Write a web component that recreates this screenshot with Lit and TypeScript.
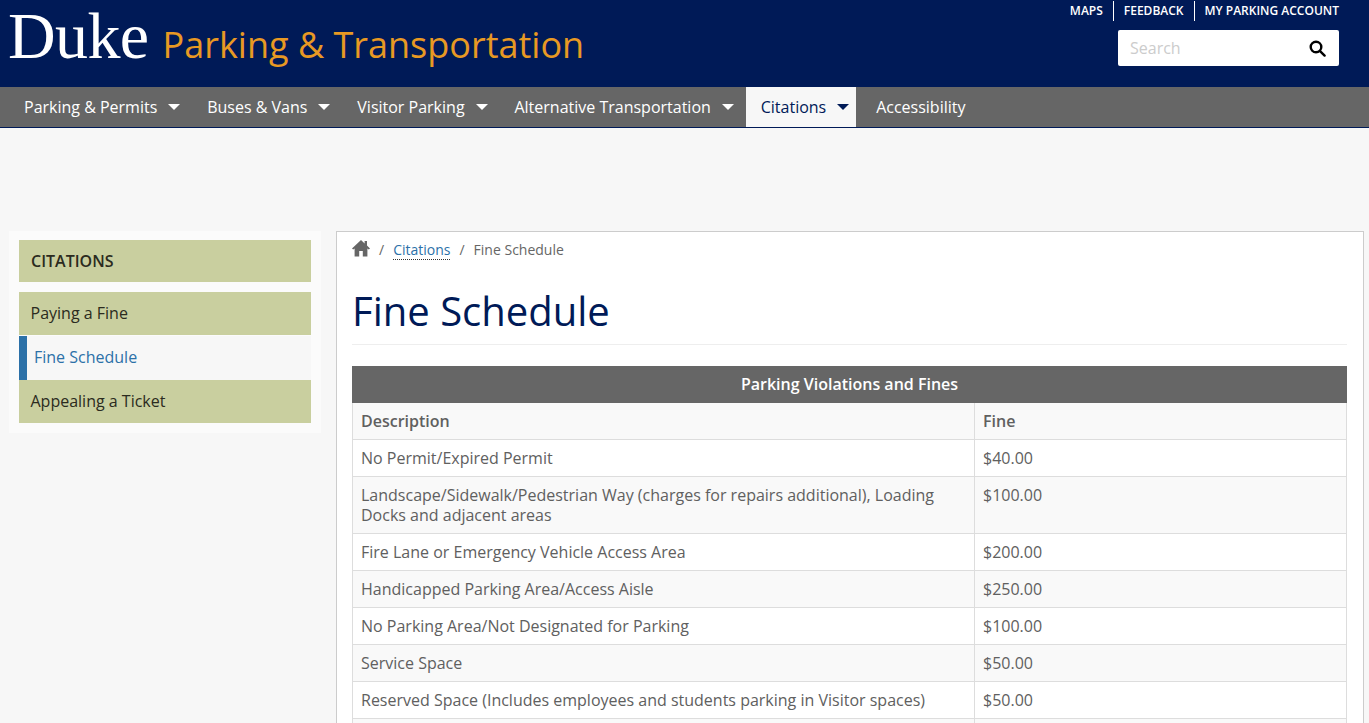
import {LitElement, html, css} from "lit";
import {customElement} from "lit/decorators.js";

const NAV = [
	{label: "Parking & Permits", caret: true},
	{label: "Buses & Vans", caret: true},
	{label: "Visitor Parking", caret: true},
	{label: "Alternative Transportation", caret: true},
	{label: "Citations", caret: true, active: true},
	{label: "Accessibility", caret: false},
];

const FINES = [
	["No Permit/Expired Permit", "$40.00"],
	["Landscape/Sidewalk/Pedestrian Way (charges for repairs additional), Loading Docks and adjacent areas", "$100.00"],
	["Fire Lane or Emergency Vehicle Access Area", "$200.00"],
	["Handicapped Parking Area/Access Aisle", "$250.00"],
	["No Parking Area/Not Designated for Parking", "$100.00"],
	["Service Space", "$50.00"],
	["Reserved Space (Includes employees and students parking in Visitor spaces)", "$50.00"],
	["", ""],
];

@customElement("app-root")
export class AppRoot extends LitElement {
	static styles = css`
		:host {
			display: block;
			height: 723px;
			overflow: hidden;
			background: #f7f7f7;
			font-family: "Open Sans", sans-serif;
			font-size: 16px;
			line-height: 20px;
			color: #606060;
		}

		* {
			box-sizing: border-box;
		}

		a {
			color: inherit;
			text-decoration: none;
		}

		.top {
			display: flex;
			justify-content: space-between;
			height: 87px;
			padding: 0 30px 0 8px;
			background: #001a57;
		}

		.brand {
			display: flex;
			align-items: baseline;
			padding-top: 1px;
		}

		.duke {
			font-family: "Liberation Serif", serif;
			font-size: 66px;
			line-height: 70px;
			letter-spacing: -0.6px;
			color: #fff;
		}

		.site {
			margin-left: 14px;
			font-size: 36px;
			line-height: 70px;
			color: #e89923;
		}

		.tools {
			display: flex;
			flex-direction: column;
			align-items: flex-end;
		}

		.links {
			display: flex;
			height: 20px;
			margin-top: 1px;
			font-size: 12px;
			line-height: 20px;
			font-weight: 600;
			color: #fff;
		}

		.links a {
			padding: 0 10px;
			border-left: 1px solid #fff;
		}

		.links a:first-child {
			border-left: 0;
		}

		.links a:last-child {
			padding-right: 0;
		}

		.search {
			display: flex;
			align-items: center;
			justify-content: space-between;
			width: 221px;
			height: 36px;
			margin-top: 9px;
			padding: 0 13px 0 12px;
			border-radius: 2px;
			background: #fff;
			color: #ccc;
		}

		.search svg {
			width: 17px;
			height: 17px;
		}

		nav {
			display: flex;
			height: 41px;
			padding-left: 9px;
			border-bottom: 1px solid #001a57;
			background: #666;
			color: #fff;
		}

		nav a {
			display: flex;
			align-items: center;
			height: 40px;
			margin-right: 5.9px;
			padding: 0 6px 0 15px;
		}

		nav a.active {
			margin-right: 5px;
			padding-right: 6.9px;
			background: #f7f7f7;
			color: #001a57;
		}

		.caret {
			width: 0;
			height: 0;
			margin-left: 11px;
			border-top: 6px solid currentColor;
			border-left: 6.5px solid transparent;
			border-right: 6.5px solid transparent;
		}

		.content {
			display: flex;
			align-items: flex-start;
			gap: 15px;
			padding: 103px 5px 0 9px;
		}

		aside {
			flex: none;
			width: 312px;
			padding: 9px 10px 10px;
			background: #fbfbfb;
			color: #2b2b20;
		}

		aside h2 {
			margin: 0 0 10px;
			padding: 11px 12px;
			background: #c9cf9f;
			font-size: 16px;
			line-height: 20px;
			font-weight: 600;
		}

		aside a {
			display: block;
			height: 43px;
			padding: 11px 11.5px;
			background: #c9cf9f;
		}

		aside a.active {
			height: 44px;
			margin-top: 1px;
			padding-left: 7px;
			border-left: 8px solid #2c71a8;
			background: #f7f7f7;
			color: #2c71a8;
		}

		main {
			flex: 1;
			min-width: 0;
			padding: 0 16px 0 15px;
			border: 1px solid #ccc;
			border-bottom: 0;
			background: #fff;
		}

		.crumbs {
			display: flex;
			align-items: center;
			height: 36px;
			font-size: 14px;
			color: #666;
		}

		.crumbs svg {
			width: 18px;
			height: 17px;
			margin-top: -4px;
		}

		.crumbs .sep {
			margin: 0 9px 0 9px;
		}

		.crumbs a {
			color: #2c71a8;
			border-bottom: 1px dotted #333;
			line-height: 18px;
		}

		h1 {
			margin: 0;
			height: 77px;
			padding-top: 20px;
			border-bottom: 1px solid #eee;
			font-size: 40px;
			line-height: 46px;
			font-weight: 400;
			color: #001a57;
		}

		table {
			width: 995px;
			margin-top: 21px;
			border-collapse: collapse;
			table-layout: fixed;
		}

		th,
		td {
			padding: 8px;
			border: 1px solid #ddd;
			text-align: left;
			vertical-align: top;
			font-weight: 400;
		}

		.col-fine {
			width: 372px;
		}

		.caption th {
			padding: 7px 8px 8px;
			border-color: #666;
			background: #666;
			color: #fff;
			text-align: center;
			font-weight: 600;
		}

		.head th {
			background: #f9f9f9;
			font-weight: 600;
		}

		tbody tr:nth-child(even) td {
			background: #f9f9f9;
		}

		tbody tr:last-child td {
			height: 37px;
		}
	`;

	render() {
		return html`
			<header class="top">
				<div class="brand">
					<span class="duke">Duke</span>
					<span class="site">Parking &amp; Transportation</span>
				</div>
				<div class="tools">
					<div class="links">
						<a href="#">MAPS</a>
						<a href="#">FEEDBACK</a>
						<a href="#">MY PARKING ACCOUNT</a>
					</div>
					<div class="search">
						<span>Search</span>
						<svg viewBox="0 0 17 17" fill="none" stroke="#000" stroke-width="2.4">
							<circle cx="7" cy="7" r="5.3" />
							<path d="M10.8 10.8 15.6 15.6" stroke-linecap="round" />
						</svg>
					</div>
				</div>
			</header>
			<nav>
				${NAV.map(
					(item) => html`
						<a href="#" class=${item.active ? "active" : ""}>
							${item.label}${item.caret ? html`<span class="caret"></span>` : ""}
						</a>
					`,
				)}
			</nav>
			<div class="content">
				<aside>
					<h2>CITATIONS</h2>
					<a href="#">Paying a Fine</a>
					<a href="#" class="active">Fine Schedule</a>
					<a href="#">Appealing a Ticket</a>
				</aside>
				<main>
					<div class="crumbs">
						<svg viewBox="0 0 18 17" fill="#666">
							<path d="M9 0 0 8.4 1.2 9.6 2.6 8.4V16.5H7.2V11H10.8V16.5H15.4V8.4L16.8 9.6 18 8.4 15 5.6V1H12.6V3.4Z" />
						</svg>
						<span class="sep">/</span>
						<a href="#">Citations</a>
						<span class="sep">/</span>
						<span>Fine Schedule</span>
					</div>
					<h1>Fine Schedule</h1>
					<table>
						<colgroup>
							<col />
							<col class="col-fine" />
						</colgroup>
						<thead>
							<tr class="caption"><th colspan="2">Parking Violations and Fines</th></tr>
							<tr class="head"><th>Description</th><th>Fine</th></tr>
						</thead>
						<tbody>
							${FINES.map(([name, fine]) => html`<tr><td>${name}</td><td>${fine}</td></tr>`)}
						</tbody>
					</table>
				</main>
			</div>
		`;
	}
}
